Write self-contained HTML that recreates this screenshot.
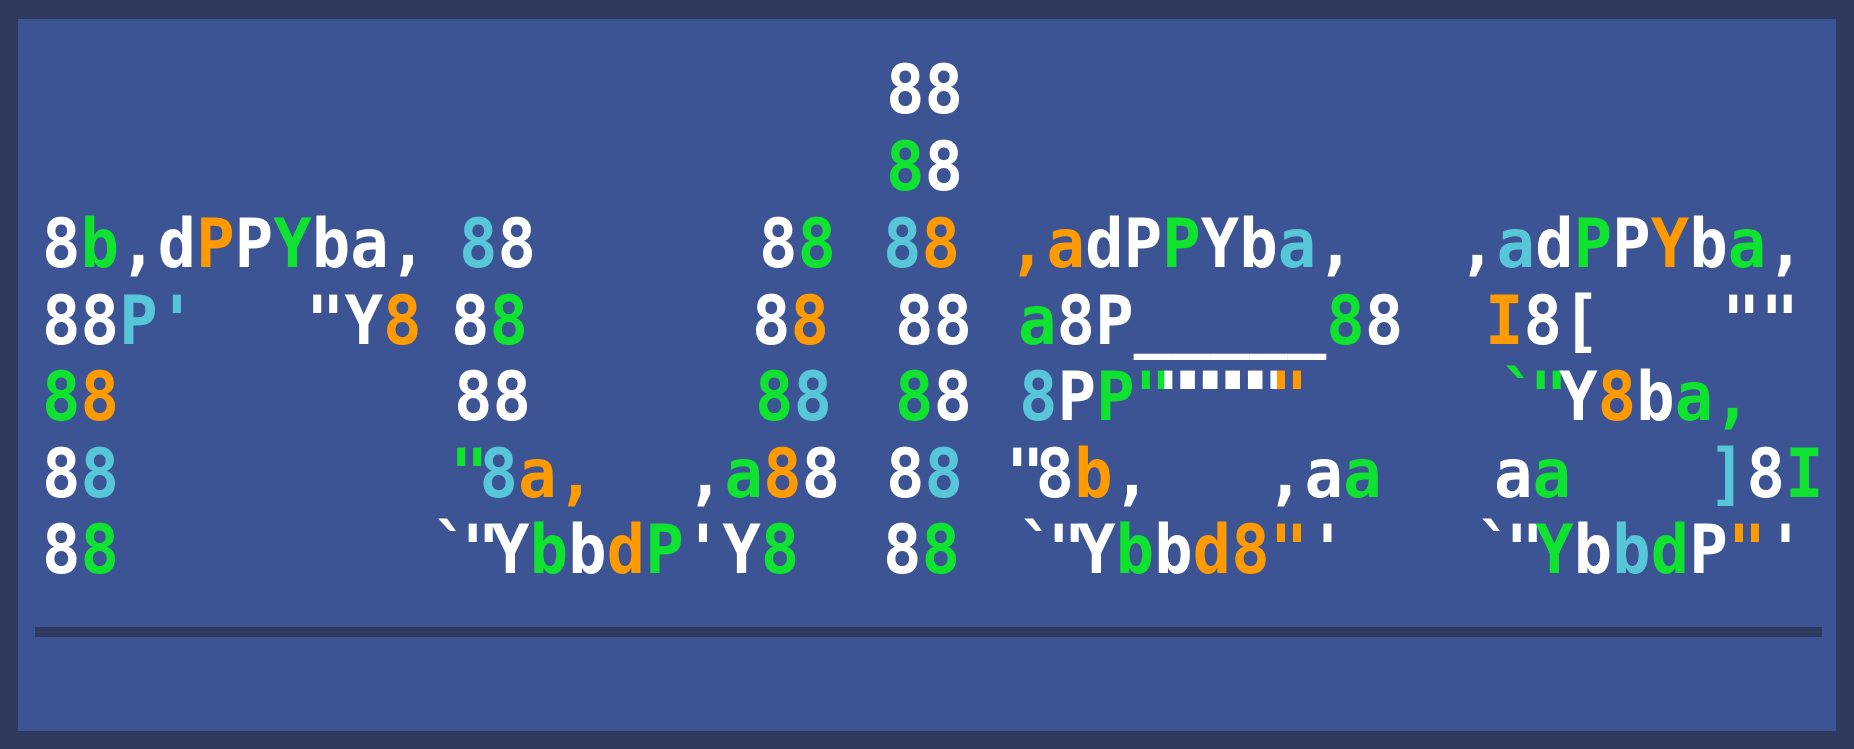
<!DOCTYPE html>
<html><head><meta charset="utf-8"><style>
html,body{margin:0;padding:0;}
body{width:1854px;height:749px;background:#2e3a5e;position:relative;overflow:hidden;}
#p{position:absolute;left:18px;top:19px;width:1818px;height:712px;background:#3d5494;}
#r{position:absolute;left:35px;top:627px;width:1787px;height:10px;background:#2e3a5e;}
.s{position:absolute;font-family:"DejaVu Sans Mono","Liberation Mono",monospace;font-size:64px;line-height:64px;color:#fff;white-space:pre;font-weight:bold;transform:scaleY(1.06);transform-origin:0 0;}
.g{color:#0fe32f}.o{color:#ff9a00}.c{color:#56c6d8}
.n{letter-spacing:-9px}
.m{letter-spacing:-16px}
</style></head><body>
<div id="p"></div><div id="r"></div>

<div class="s" style="left:886px;top:57px">88</div>
<div class="s" style="left:886px;top:134px"><span class="g">8</span>8</div>

<div class="s" style="left:42px;top:211px">8<span class="g">b</span>,d<span class="o">P</span>P<span class="g">Y</span>ba,</div>
<div class="s" style="left:459px;top:211px"><span class="c">8</span>8</div>
<div class="s" style="left:759px;top:211px">8<span class="g">8</span></div>
<div class="s" style="left:883px;top:211px"><span class="c">8</span><span class="o">8</span></div>
<div class="s" style="left:1008px;top:211px"><span class="o">,a</span>dP<span class="g">P</span>Yb<span class="c">a</span>,</div>
<div class="s" style="left:1458px;top:211px">,<span class="c">a</span>d<span class="g">P</span>P<span class="o">Y</span>b<span class="g">a</span>,</div>

<div class="s" style="left:42px;top:288px">88<span class="c">P'</span></div>
<div class="s" style="left:306px;top:288px">"Y<span class="o">8</span></div>
<div class="s" style="left:451px;top:288px">8<span class="g">8</span></div>
<div class="s" style="left:752px;top:288px">8<span class="o">8</span></div>
<div class="s" style="left:895px;top:288px">88</div>
<div class="s" style="left:1018px;top:288px"><span class="g">a</span>8P_____<span class="g">8</span>8</div>
<div class="s" style="left:1485px;top:288px"><span class="o">I</span>8[</div>
<div class="s" style="left:1722px;top:288px">""</div>

<div class="s" style="left:42px;top:364px"><span class="g">8</span><span class="o">8</span></div>
<div class="s" style="left:454px;top:364px">88</div>
<div class="s" style="left:755px;top:364px"><span class="g">8</span><span class="c">8</span></div>
<div class="s" style="left:895px;top:364px"><span class="g">8</span>8</div>
<div class="s" style="left:1019px;top:364px"><span class="c">8</span>P<span class="g">P</span><span class="m"><span class="g">"</span>"""""<span class="o">"</span></span></div>
<div class="s" style="left:1500px;top:364px"><span class="g n">`"</span>Y<span class="o">8</span>b<span class="g">a,</span></div>

<div class="s" style="left:42px;top:441px">8<span class="c">8</span></div>
<div class="s" style="left:450px;top:441px"><span class="g n">"</span><span class="c">8</span><span class="o">a,</span></div>
<div class="s" style="left:686px;top:441px">,<span class="g">a</span><span class="o">8</span>8</div>
<div class="s" style="left:886px;top:441px">8<span class="c">8</span></div>
<div class="s" style="left:1006px;top:441px"><span class="n">"</span>8<span class="o">b</span>,</div>
<div class="s" style="left:1266px;top:441px">,a<span class="g">a</span></div>
<div class="s" style="left:1494px;top:441px">a<span class="g">a</span></div>
<div class="s" style="left:1708px;top:441px"><span class="c">]</span>8<span class="g">I</span></div>

<div class="s" style="left:42px;top:517px">8<span class="g">8</span></div>
<div class="s" style="left:432px;top:517px"><span class="n">`"</span>Y<span class="g">b</span>b<span class="o">d</span><span class="g">P</span>'Y<span class="g">8</span></div>
<div class="s" style="left:883px;top:517px">8<span class="g">8</span></div>
<div class="s" style="left:1018px;top:517px"><span class="n">`"</span>Y<span class="g">b</span>b<span class="o">d8"</span>'</div>
<div class="s" style="left:1476px;top:517px"><span class="n">`"</span><span class="g">Y</span>b<span class="c">b</span><span class="g">d</span>P<span class="o">"</span>'</div>
</body></html>
